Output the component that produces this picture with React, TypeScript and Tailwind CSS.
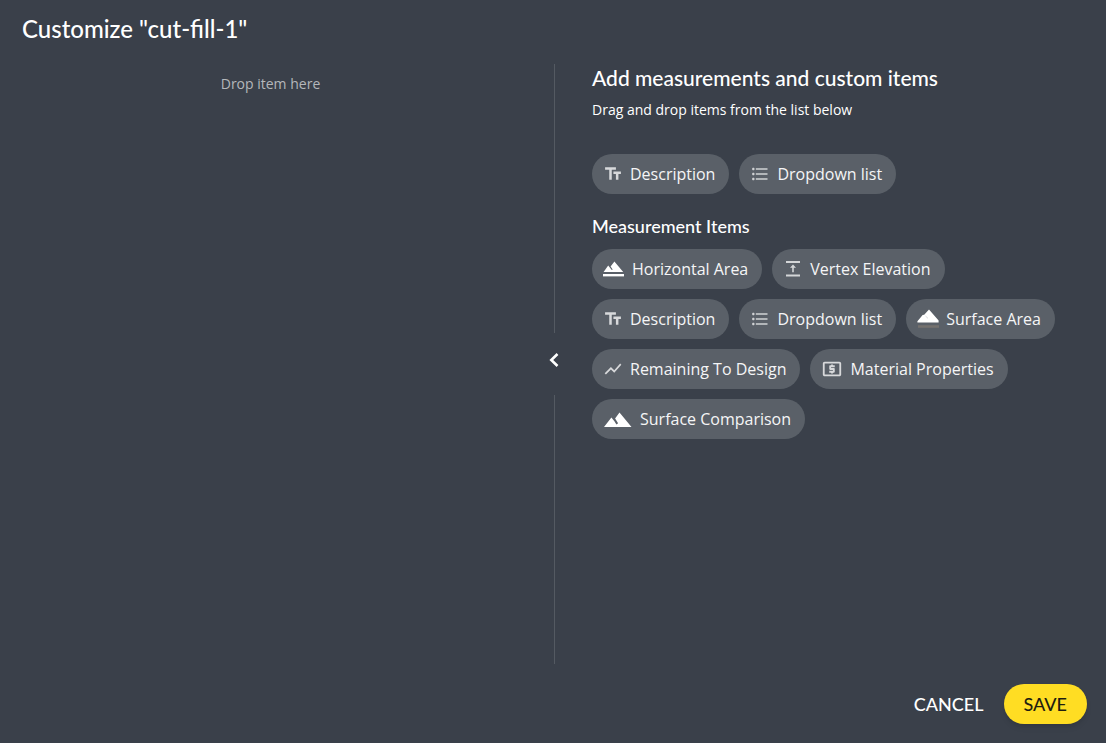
// I render the dialog for picking which items show on a measurement
import React from 'react';
import { MdFormatListBulleted, MdLocalAtm, MdShowChart, MdTextFields } from 'react-icons/md';

interface ChipProps {
  icon: React.ReactNode;
  label: string;
}

function Chip({ icon, label }: ChipProps) {
  return (
    <button
      type="button"
      className="flex h-10 cursor-grab items-center gap-[7px] rounded-full bg-[#5a6068] pr-3.5 pb-px pl-[11px] text-base whitespace-nowrap text-[#f5f5f6]"
    >
      {icon}
      {label}
    </button>
  );
}

const textIcon = <MdTextFields className="size-5 text-[#d8d9db]" />;
const listIcon = <MdFormatListBulleted className="size-5 text-[#d0d2d4]" />;

function HorizontalAreaIcon() {
  return (
    <svg viewBox="0 0 22 20" className="h-5 w-[22px] fill-white">
      <path d="M.6 13 5.2 6.6l1.6 1.8 2 2.7.9-.7-2.1-2.8 3.8-5.2L20.2 13Z" />
      <path d="M0 15h21v2.4H0z" />
    </svg>
  );
}

function VertexIcon() {
  return (
    <svg viewBox="0 0 20 20" className="size-5 fill-[#d4d6d8]">
      <path d="M3 2h14v2H3zM3 15.5h14v2H3zM10 5.5l3 3.2h-2.2v4.6H9.2V8.7H7z" />
    </svg>
  );
}

function SurfaceAreaIcon() {
  return (
    <svg viewBox="0 0 22 20" className="h-5 w-[22px]">
      <path d="M.4 12.3 4 8l1.6-2 1.6-.2L12 .4l9.6 11.2v1.9H.4Z" className="fill-white" />
      <path d="m8.5 7 2.5 2.4" className="stroke-[#c9cbce]" strokeWidth=".7" />
      <path d="M1 16.2h21v2.6H1z" className="fill-[#74716e]" />
    </svg>
  );
}

function ComparisonIcon() {
  return (
    <svg viewBox="0 0 30 20" className="h-5 w-[30px] fill-white">
      <path d="M1 18 8.4 8.4l3.2 4.2 1.8 2.8 1.7-1.2-3-4.6L16.5 3.5 28.5 18Z" />
    </svg>
  );
}

const measurementItems: ChipProps[] = [
  { icon: <HorizontalAreaIcon />, label: 'Horizontal Area' },
  { icon: <VertexIcon />, label: 'Vertex Elevation' },
  { icon: textIcon, label: 'Description' },
  { icon: listIcon, label: 'Dropdown list' },
  { icon: <SurfaceAreaIcon />, label: 'Surface Area' },
  { icon: <MdShowChart className="size-5 text-[#d8d9db]" />, label: 'Remaining To Design' },
  { icon: <MdLocalAtm className="size-[22px] text-[#d8d9db]" />, label: 'Material Properties' },
  { icon: <ComparisonIcon />, label: 'Surface Comparison' },
];

export default function App() {
  return (
    <div className="flex min-h-screen flex-col bg-[#3a404a] font-['Open_Sans',sans-serif] text-white">
      <header className="flex h-16 items-start px-[22px] pt-[15px]">
        <h1 className="font-['Lato',sans-serif] text-2xl leading-7 font-medium">Customize "cut-fill-1"</h1>
      </header>

      <main className="grid flex-1 grid-cols-[1fr_30px_1fr] pl-0.5">
        <section className="pt-2.5 text-center">
          <p className="text-sm leading-5 text-[#b4b7bb]">Drop item here</p>
        </section>

        <div className="flex flex-col items-center">
          <div className="w-px flex-1 bg-[#545a62]" />
          <button type="button" aria-label="Collapse" className="flex h-[62px] w-[30px] items-center justify-center pb-2">
            <svg viewBox="0 0 10 14" className="h-[14px] w-[10px]" fill="none" stroke="white" strokeWidth="2.6">
              <path d="M8.5 1 2.3 7l6.2 6" />
            </svg>
          </button>
          <div className="w-px flex-1 bg-[#545a62]" />
        </div>

        <section className="px-[23px]">
          <h2 className="font-['Lato',sans-serif] text-[21px] leading-7 font-medium">
            Add measurements and custom items
          </h2>
          <p className="mt-2 text-sm leading-5">Drag and drop items from the list below</p>
          <div className="mt-[34px] flex flex-wrap gap-2.5">
            <Chip icon={textIcon} label="Description" />
            <Chip icon={listIcon} label="Dropdown list" />
          </div>
          <h3 className="mt-5 font-['Lato',sans-serif] text-lg leading-6 font-medium">Measurement Items</h3>
          <div className="mt-[11px] flex flex-wrap gap-2.5">
            {measurementItems.map((item) => (
              <Chip key={item.label} icon={item.icon} label={item.label} />
            ))}
          </div>
        </section>
      </main>

      <footer className="flex justify-end pt-5 pr-[19px] pb-[19px] font-['Lato',sans-serif] text-lg font-medium">
        <button type="button" className="h-10 px-5">
          CANCEL
        </button>
        <button type="button" className="h-10 rounded-full bg-[#ffdd23] px-5 text-[#1f1d10] shadow-md">
          SAVE
        </button>
      </footer>
    </div>
  );
}
